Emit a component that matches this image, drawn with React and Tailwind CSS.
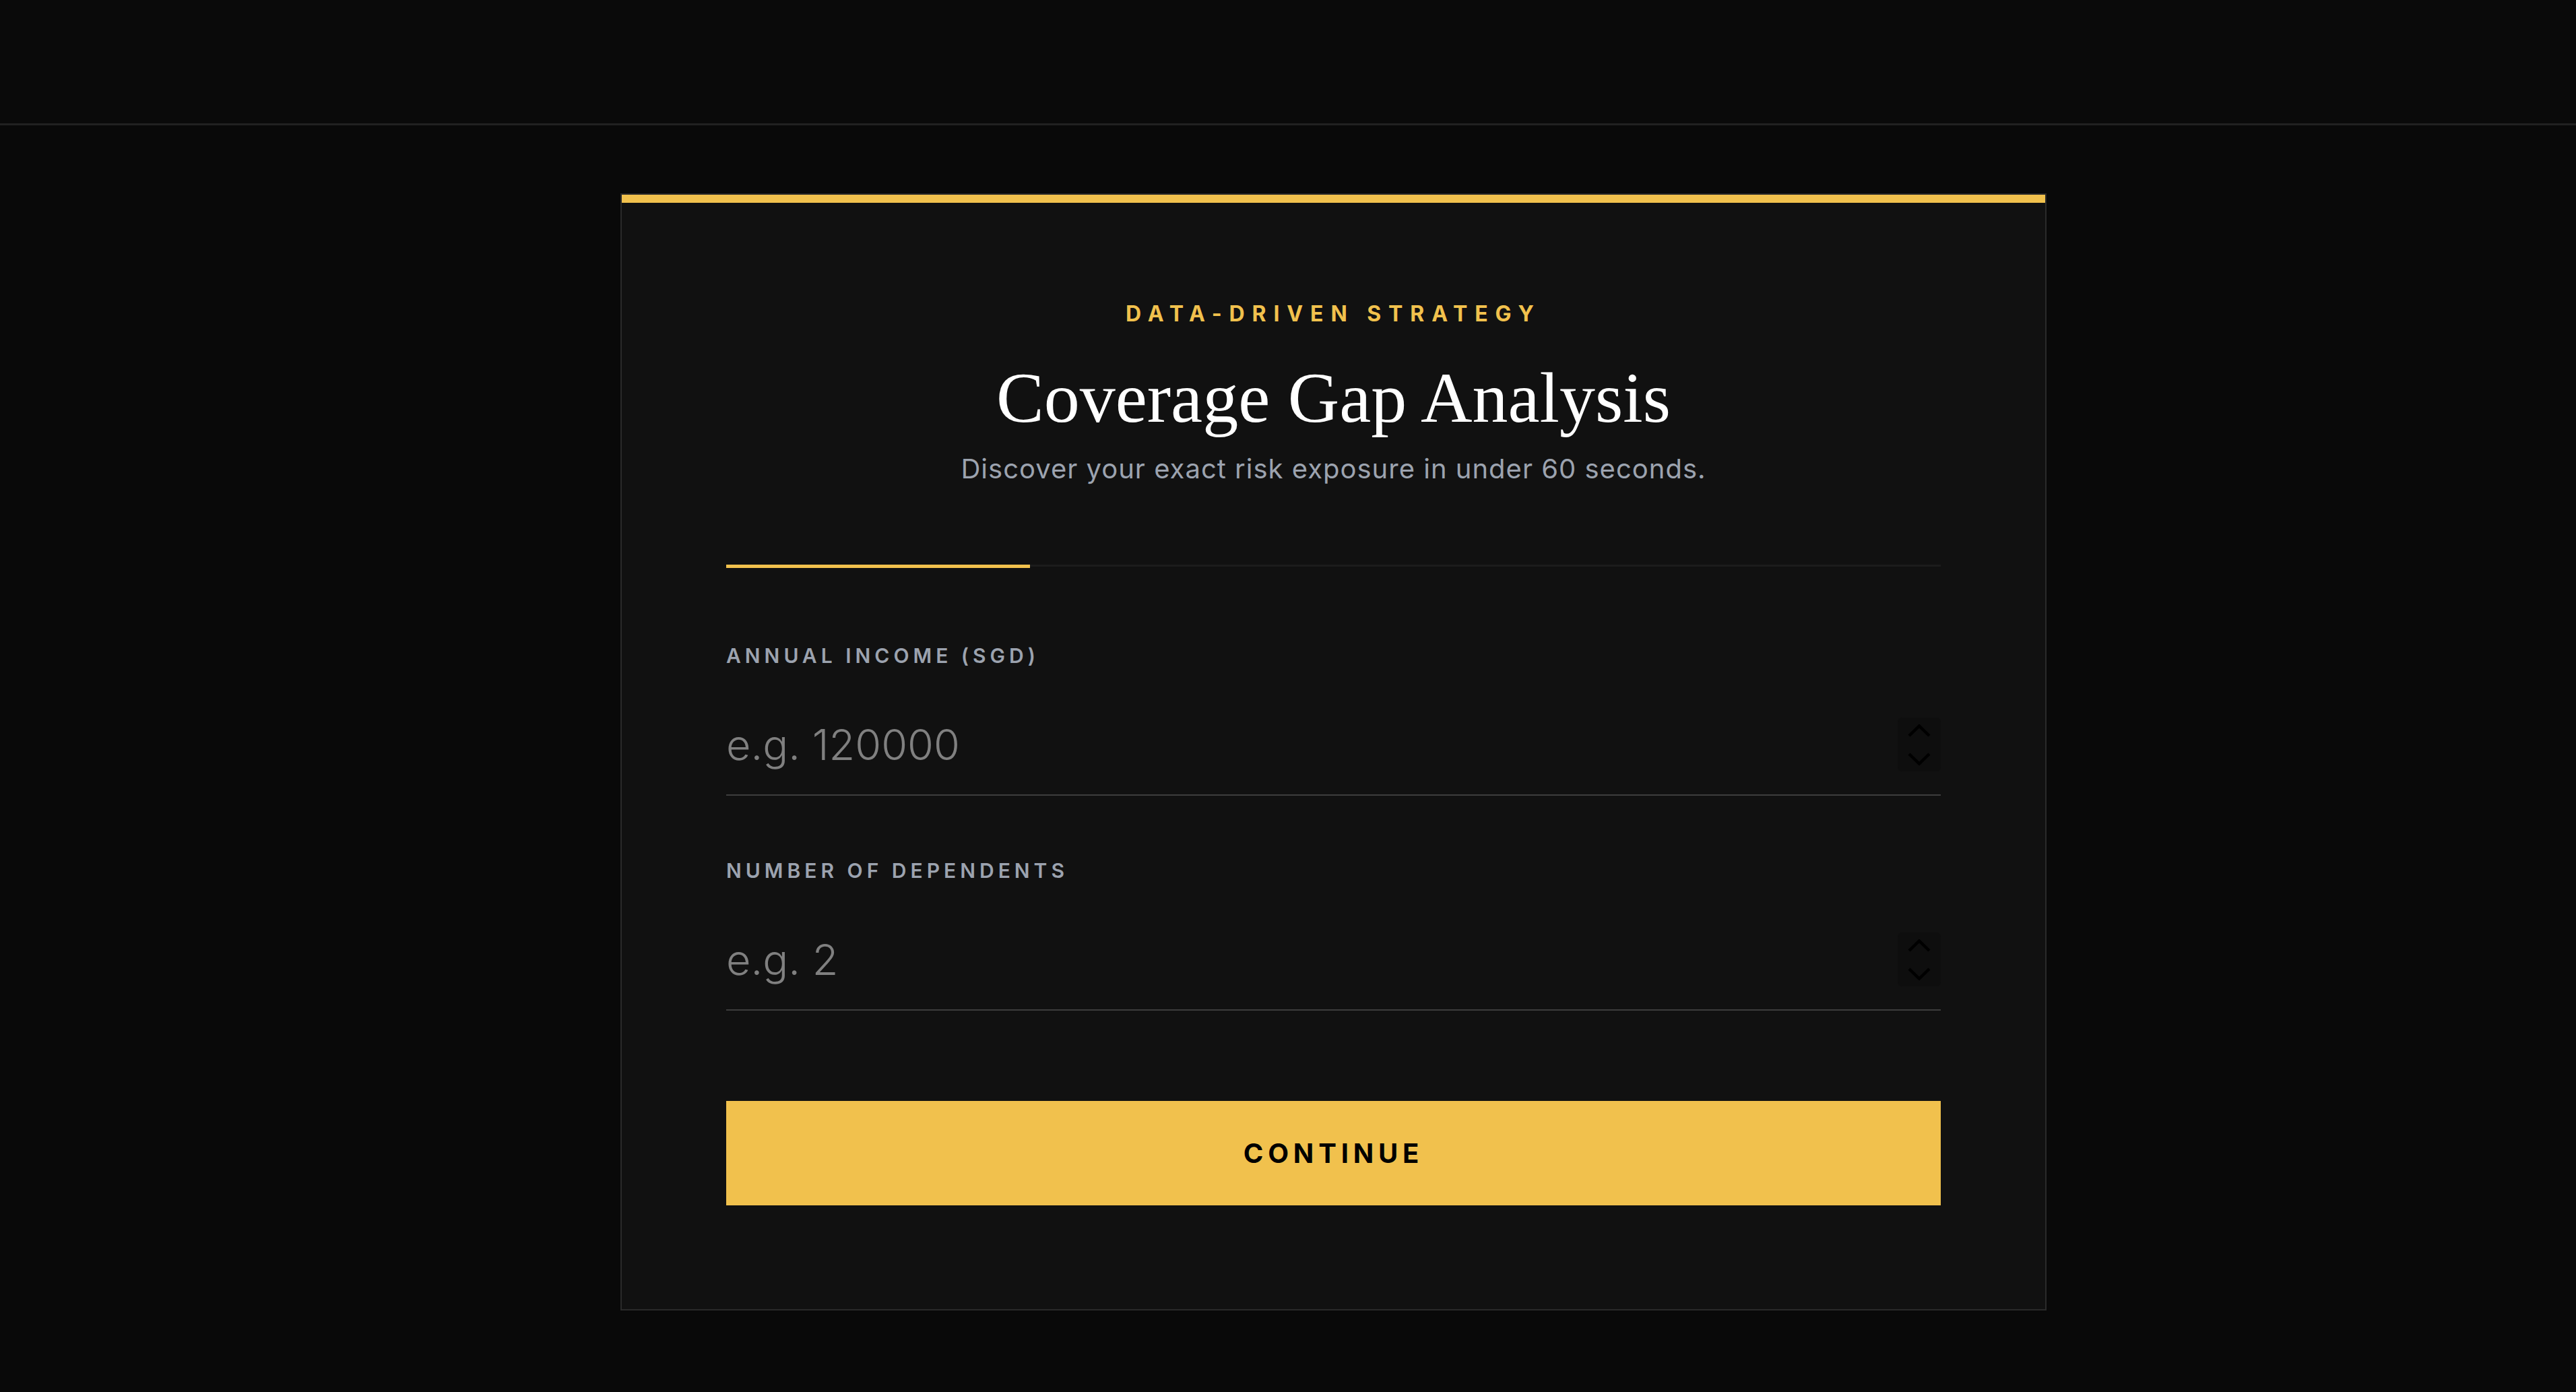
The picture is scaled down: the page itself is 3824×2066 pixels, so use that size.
import React from 'react';

// Native-looking number stepper, drawn dark on dark like the browser's own
const Stepper = () => (
  <div className="flex h-[80px] w-[64px] shrink-0 flex-col items-center justify-center gap-[23px] rounded-md bg-[#0e0e0e]">
    <svg width="34" height="19" viewBox="0 0 34 19" fill="none" stroke="#000" strokeWidth="4.5">
      <polyline points="2,17 17,2.5 32,17" />
    </svg>
    <svg width="34" height="19" viewBox="0 0 34 19" fill="none" stroke="#000" strokeWidth="4.5">
      <polyline points="2,2 17,16.5 32,2" />
    </svg>
  </div>
);

const Field = ({ label, placeholder, className }) => (
  <div className={className}>
    <label className="block text-[30px] leading-[30px] font-semibold tracking-[0.2em] text-[#9ca3af]">
      {label}
    </label>
    <div className="mt-[43px] flex h-[150px] items-center border-b-2 border-[#3d3d3d]">
      <input
        type="text"
        inputMode="numeric"
        placeholder={placeholder}
        className="h-[148px] min-w-0 flex-1 bg-transparent text-[63px] font-light text-white outline-none placeholder:text-[#808080]"
      />
      <Stepper />
    </div>
  </div>
);

const App = () => {
  return (
    <div className="min-h-screen bg-[#090909] font-['Inter',sans-serif]">
      <header className="h-[186px] border-b-[3px] border-[#212121] bg-[#0a0a0a]" />

      <main className="flex justify-center pl-[135px] pt-[101px] pb-[120px]">
        <div className="w-[2117px] border-2 border-[#2a2a2a] bg-[#111111]">
          <div className="h-[12px] bg-[#f1c14d]" />

          <div className="px-[155px] pt-[149px] pb-[154px]">
            <p className="text-center text-[32px] leading-[32px] font-bold tracking-[0.34em] text-[#f1c14d]">
              DATA-DRIVEN STRATEGY
            </p>
            <h1 className="mt-[56px] text-center font-['Liberation_Serif',serif] text-[106px] leading-[106px] font-normal text-white">
              Coverage Gap Analysis
            </h1>
            <p className="mt-[32px] text-center text-[40px] leading-[40px] tracking-[0.025em] text-[#9ca3af]">
              Discover your exact risk exposure in under 60 seconds.
            </p>

            {/* step progress: 1 of 4 */}
            <div className="mt-[122px] flex h-[5px] items-start">
              <div className="h-[5px] w-1/4 bg-[#f1c14d]" />
              <div className="h-[3px] flex-1 bg-[#1c1c1c]" />
            </div>

            <Field className="mt-[115px]" label="ANNUAL INCOME (SGD)" placeholder="e.g. 120000" />
            <Field className="mt-[96px]" label="NUMBER OF DEPENDENTS" placeholder="e.g. 2" />

            <button className="mt-[134px] flex h-[155px] w-full items-center justify-center bg-[#f1c14d] text-[40px] font-bold tracking-[0.17em] text-black">
              CONTINUE
            </button>
          </div>
        </div>
      </main>
    </div>
  );
};

export default App;
